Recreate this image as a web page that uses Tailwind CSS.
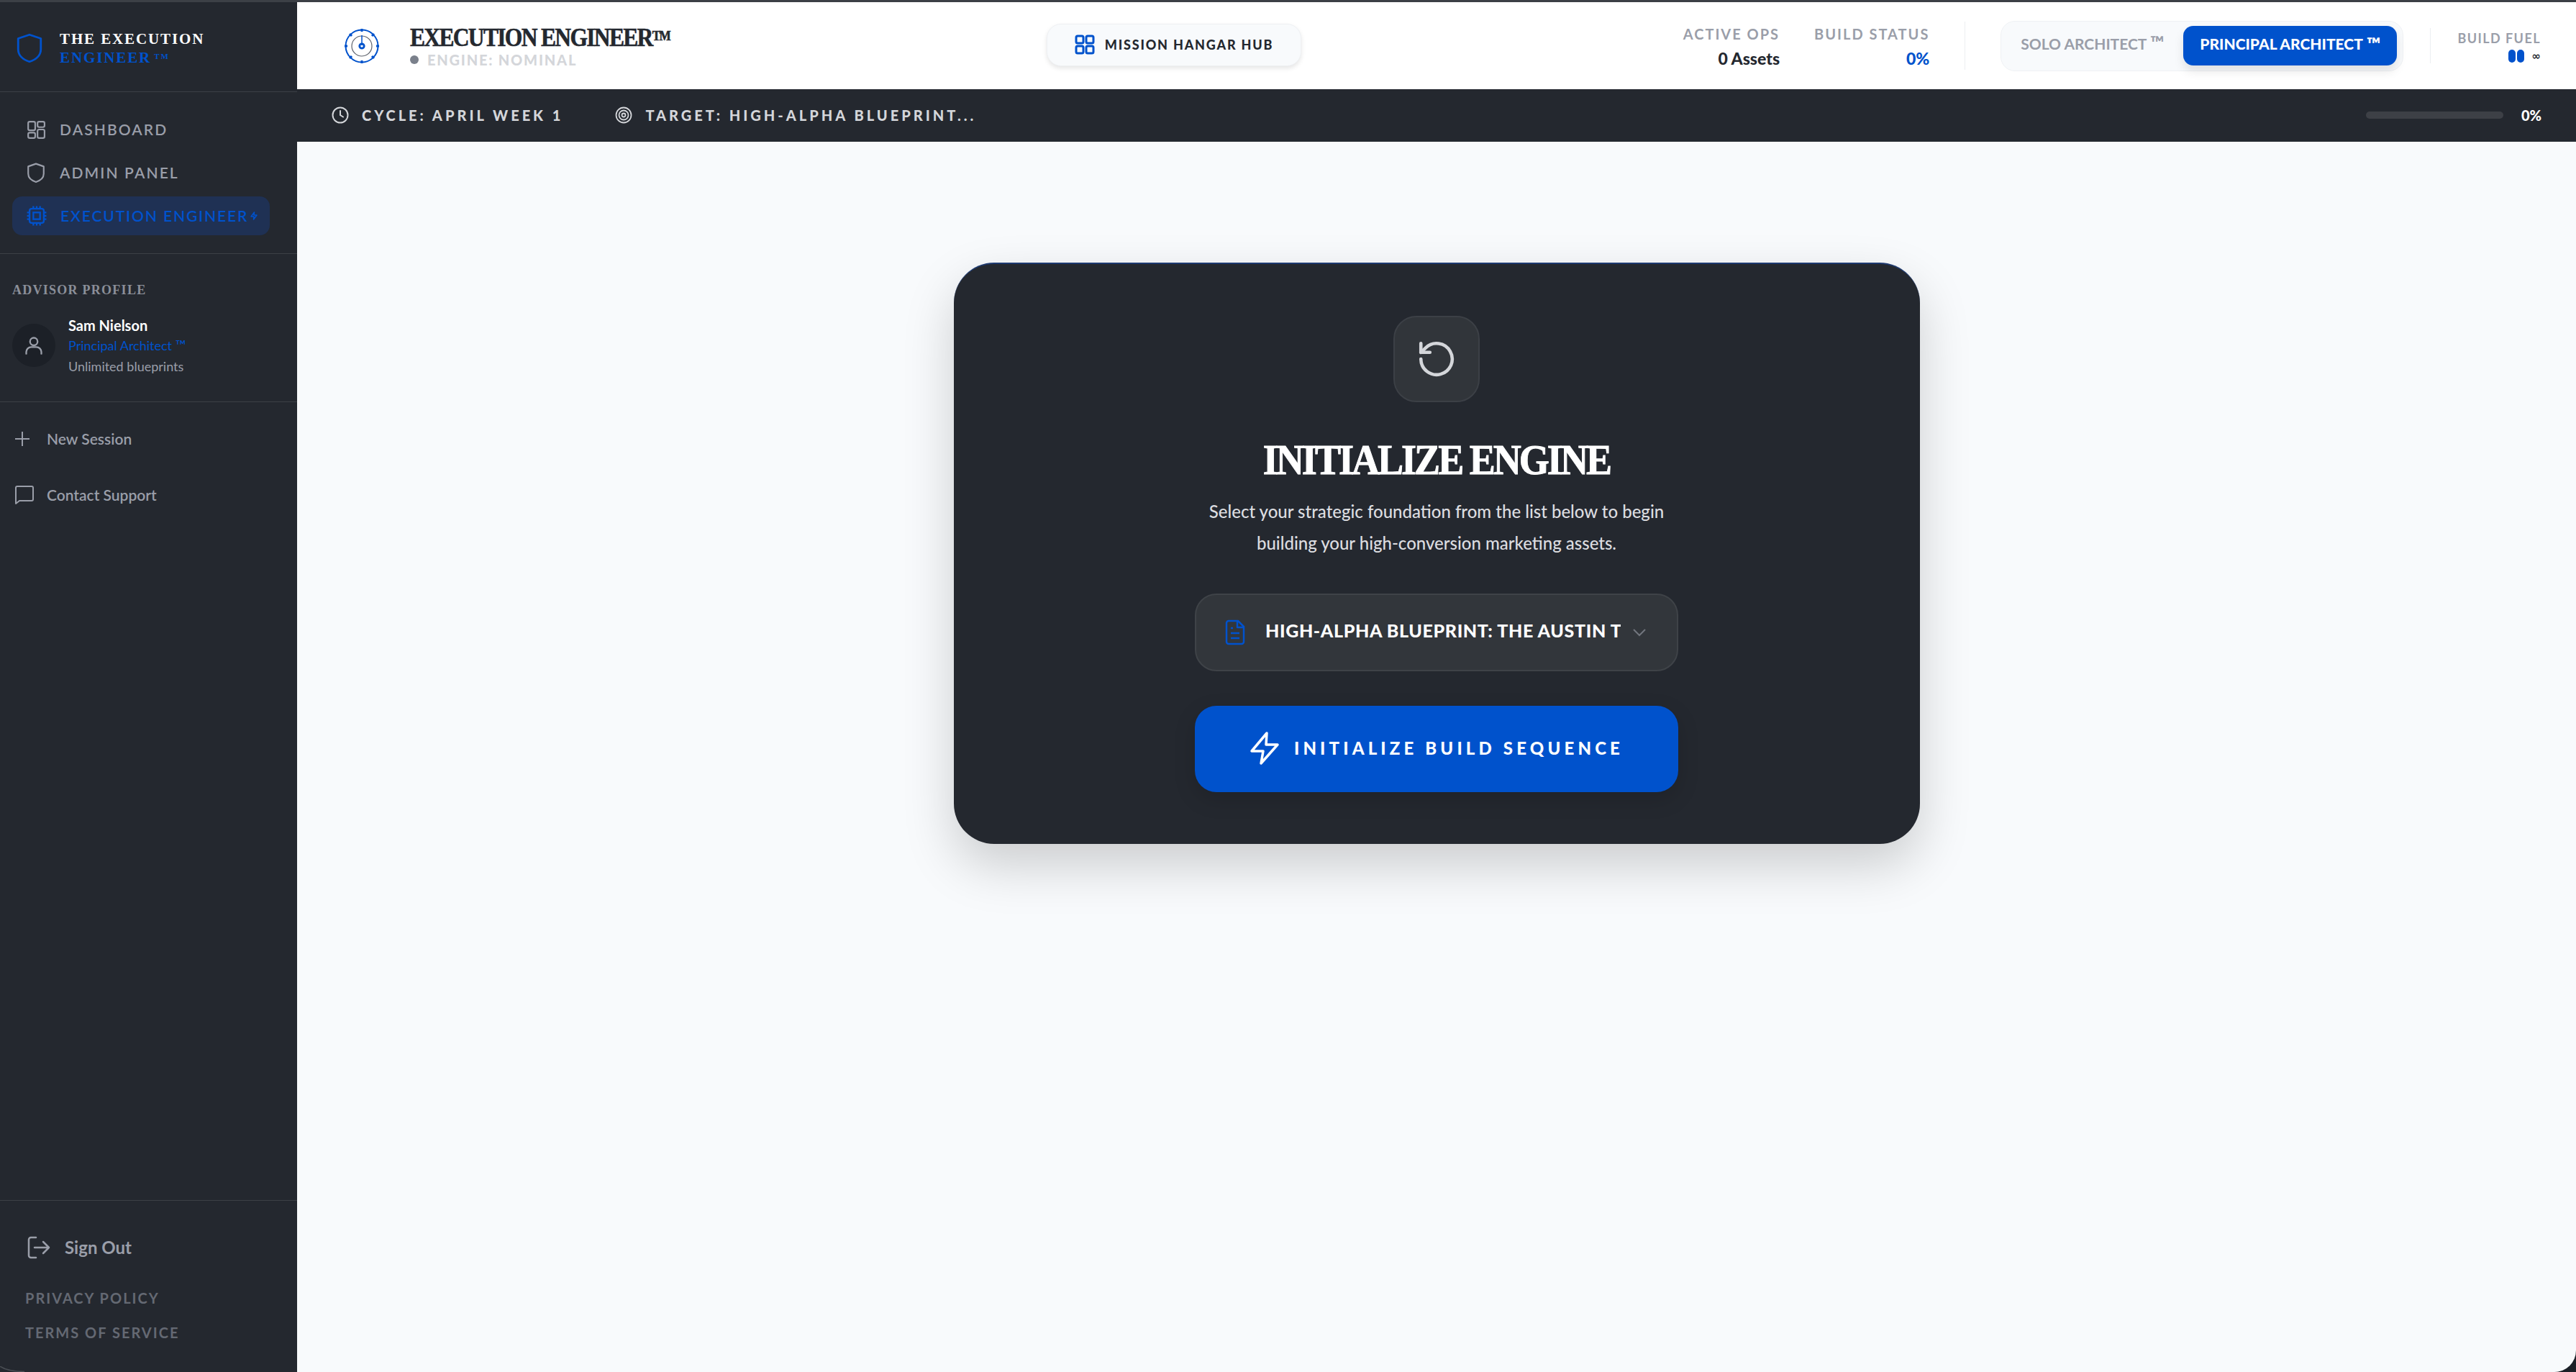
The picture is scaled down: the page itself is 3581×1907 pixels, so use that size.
<!DOCTYPE html>
<html lang="en">
<head>
  <meta charset="UTF-8" />
  <title>Execution Engineer</title>
  <script src="https://cdn.jsdelivr.net/npm/@tailwindcss/browser@4"></script>
</head>
<body class="bg-[#1b2027]">
  <div class="flex h-[1907px] w-[3581px] flex-col overflow-hidden font-['Lato',sans-serif]">
    <div class="h-[3px] shrink-0 bg-[#3c4046]"></div>
    <div class="flex min-h-0 flex-1">
      <!-- Sidebar -->
      <aside class="relative flex w-[413px] shrink-0 flex-col bg-[#24282f]">
        <div class="flex h-[125px] shrink-0 items-center gap-[24px] border-b border-[#3c4046] pt-[4px] pl-[23px]">
          <svg class="h-[44px] w-[36px]" viewBox="0 0 24 28" fill="none" stroke="#0052cc" stroke-width="1.9" stroke-linejoin="round"><path d="M12 1.5 22.5 5v10c0 6-5 9.800-10.500 11.500C6.500 24.800 1.500 21 1.500 15V5z"/></svg>
          <div class="font-['Liberation_Serif',serif] text-[21px] leading-[26px] font-bold tracking-[0.09em] text-white">
            <div>THE EXECUTION</div>
            <div class="text-[#0052cc]">ENGINEER<sup class="ml-[4px] text-[11px]">TM</sup></div>
          </div>
        </div>
        <nav class="flex h-[225px] shrink-0 flex-col gap-[6px] border-b border-[#3c4046] px-[17px] pt-[25px]">
          <a class="flex h-[54px] w-[358px] items-center gap-[20px] px-[20px] text-[21px] font-semibold tracking-[0.1em] text-[#9a9ea9]">
            <svg class="h-[26px] w-[26px]" viewBox="0 0 24 24" fill="none" stroke="currentColor" stroke-width="2"><rect x="2" y="2" width="9" height="11" rx="2"/><rect x="14" y="2" width="9" height="7" rx="2"/><rect x="14" y="12" width="9" height="11" rx="2"/><rect x="2" y="16" width="9" height="7" rx="2"/></svg>
            DASHBOARD
          </a>
          <a class="flex h-[54px] w-[358px] items-center gap-[20px] px-[20px] text-[21px] font-semibold tracking-[0.1em] text-[#9a9ea9]">
            <svg class="h-[28px] w-[26px]" viewBox="0 0 24 26" fill="none" stroke="currentColor" stroke-width="2" stroke-linejoin="round"><path d="M12 1.500 22 5v9.500c0 5.500-4.500 8.800-10 10.500C6.500 23.300 2 20 2 14.500V5z"/></svg>
            ADMIN PANEL
          </a>
          <a class="flex h-[54px] w-[358px] items-center gap-[19px] rounded-[14px] bg-[#1f3154] px-[20px] text-[21px] font-semibold tracking-[0.09em] whitespace-nowrap text-[#0052cc]">
            <svg class="h-[28px] w-[28px] shrink-0" viewBox="0 0 24 24" fill="none" stroke="currentColor" stroke-width="2"><rect x="3.500" y="3.500" width="17" height="17" rx="2.500"/><rect x="8" y="8" width="8" height="8"/><path d="M8 0.500v3M12 0.500v3M16 0.500v3M8 20.500v3M12 20.500v3M16 20.500v3M0.500 8h3M0.500 12h3M0.500 16h3M20.500 8h3M20.500 12h3M20.500 16h3"/></svg>
            <span class="flex items-center">EXECUTION ENGINEER<svg class="ml-[2px] h-[12px] w-[12px]" viewBox="0 0 24 24" fill="none" stroke="currentColor" stroke-width="3" stroke-linejoin="round"><path d="M13 2 4 14h8l-1 8 9-12h-8z"/></svg></span>
          </a>
        </nav>
        <section class="h-[206px] shrink-0 border-b border-[#3c4046] px-[17px] pt-[39px]">
          <div class="font-['Liberation_Serif',serif] text-[18px] leading-[22px] font-bold tracking-[0.07em] text-[#8b8f99]">ADVISOR PROFILE</div>
          <div class="mt-[16px] flex gap-[18px]">
            <div class="mt-[20px] flex h-[60px] w-[60px] items-center justify-center rounded-full bg-[#1c2027]">
              <svg class="h-[28px] w-[28px]" viewBox="0 0 24 24" fill="none" stroke="#9a9ea9" stroke-width="2" stroke-linecap="round"><circle cx="12" cy="7.500" r="4.500"/><path d="M3 22v-2a6 6 0 0 1 6-6h6a6 6 0 0 1 6 6v2"/></svg>
            </div>
            <div class="pt-[9px]">
              <div class="text-[20px] leading-[27px] font-bold text-white">Sam Nielson</div>
              <div class="text-[18px] leading-[28px] text-[#0052cc]">Principal Architect <span class="text-[20px] leading-none">™</span></div>
              <div class="text-[18px] leading-[30px] text-[#9a9ea9]">Unlimited blueprints</div>
            </div>
          </div>
        </section>
        <div class="flex flex-col gap-[40px] px-[20px] pt-[32px]">
          <a class="flex h-[38px] items-center gap-[23px] text-[21px] font-semibold text-[#9a9ea9]">
            <svg class="h-[22px] w-[22px]" viewBox="0 0 22 22" fill="none" stroke="currentColor" stroke-width="2"><path d="M11 1v20M1 11h20"/></svg>
            New Session
          </a>
          <a class="flex h-[38px] items-center gap-[17px] text-[21px] font-semibold text-[#9a9ea9]">
            <svg class="h-[28px] w-[28px]" viewBox="0 0 28 28" fill="none" stroke="currentColor" stroke-width="2" stroke-linejoin="round"><path d="M2 4a2 2 0 0 1 2-2h20a2 2 0 0 1 2 2v16a2 2 0 0 1-2 2H7l-5 4z"/></svg>
            Contact Support
          </a>
        </div>
        <div class="mt-auto h-[239px] border-t border-[#3c4046] px-[35px] pt-[45px]">
          <a class="flex h-[40px] items-center gap-[20px] pl-[3px] text-[24px] font-bold text-[#9a9ea9]">
            <svg class="h-[32px] w-[32px]" viewBox="0 0 32 32" fill="none" stroke="currentColor" stroke-width="2.500" stroke-linecap="round" stroke-linejoin="round"><path d="M12 2H5a3 3 0 0 0-3 3v22a3 3 0 0 0 3 3h7M10 16h20M22 8l8 8-8 8"/></svg>
            Sign Out
          </a>
          <div class="mt-[38px] text-[20px] leading-[24px] font-bold tracking-[0.1em] text-[#646973]">PRIVACY POLICY</div>
          <div class="mt-[24px] text-[20px] leading-[24px] font-bold tracking-[0.1em] text-[#646973]">TERMS OF SERVICE</div>
        </div>
        <svg class="absolute bottom-0 left-0 h-[8px] w-[34px]" viewBox="0 0 34 8" fill="none" stroke="#4a4e54" stroke-width="1.500"><path d="M0 0Q10 7 34 7.500"/></svg>
      </aside>

      <div class="flex min-w-0 flex-1 flex-col overflow-hidden rounded-br-[30px] bg-[#f8fafc]">
        <!-- Header -->
        <header class="relative flex h-[121px] shrink-0 items-center bg-white pr-[49px] pl-[65px]">
          <svg class="h-[50px] w-[50px] shrink-0" viewBox="0 0 50 50" fill="none" stroke="#0052cc">
            <circle cx="25" cy="25" r="22.500" stroke-width="2"/>
            <path d="M25 1v4M25 45v4M1 25h4M45 25h4M8 8l3 3M39 39l3 3M42 8l-3 3M11 39l-3 3" stroke-width="3"/>
            <circle cx="25" cy="25" r="14" stroke="#5b606a" stroke-width="1.200"/>
            <path d="M25 24V10" stroke-width="1.500"/>
            <circle cx="25" cy="25" r="3.200" stroke-width="2.800"/>
          </svg>
          <div class="ml-[42px]">
            <div class="origin-left scale-x-[0.9] font-['Liberation_Serif',serif] text-[35px] leading-[34px] font-bold tracking-[-0.053em] whitespace-nowrap text-[#24282f] [-webkit-text-stroke:0.6px_#24282f]">EXECUTION ENGINEER<span class="align-[8px] text-[19px]">TM</span></div>
            <div class="mt-[2px] flex items-center gap-[12px] text-[20px] leading-[22px] font-black tracking-[0.09em] text-[#d4d6da]"><span class="h-[12px] w-[12px] rounded-full bg-[#7a808b]"></span>ENGINE: NOMINAL</div>
          </div>
          <!-- hangar button sits centered over the header -->
          <button class="absolute top-[30px] left-[1042px] flex h-[59px] w-[354px] items-center justify-center gap-[14px] rounded-[20px] border border-[#eef0f3] bg-[#f8fafc] pb-[1px] text-[18px] font-black tracking-[0.1em] text-[#24282f] shadow-[0_3px_6px_rgba(0,0,0,0.1)]">
            <svg class="h-[28px] w-[28px]" viewBox="0 0 28 28" fill="none" stroke="#0052cc" stroke-width="3"><rect x="2" y="2" width="10" height="10" rx="2"/><rect x="16" y="2" width="10" height="10" rx="2"/><rect x="2" y="16" width="10" height="10" rx="2"/><rect x="16" y="16" width="10" height="10" rx="2"/></svg>
            MISSION HANGAR HUB
          </button>
          <div class="ml-auto flex items-center">
            <div class="text-right">
              <div class="text-[20px] leading-[26px] font-bold tracking-[0.1em] text-[#9a9ea9]">ACTIVE OPS</div>
              <div class="mt-[8px] text-[23px] leading-[26px] font-black text-[#24282f]">0 Assets</div>
            </div>
            <div class="ml-[48px] text-right">
              <div class="text-[20px] leading-[26px] font-bold tracking-[0.1em] text-[#9a9ea9]">BUILD STATUS</div>
              <div class="mt-[8px] text-[23px] leading-[26px] font-black text-[#0052cc]">0%</div>
            </div>
            <div class="mx-[49px] h-[67px] w-px bg-[#eceef1]"></div>
            <div class="flex h-[70px] w-[560px] items-center rounded-[20px] border border-[#eff1f4] bg-[#f8fafc] pr-[8px]">
              <div class="w-[254px] pb-[6px] text-center text-[21px] font-bold whitespace-nowrap text-[#9a9ea9]">SOLO ARCHITECT <span class="text-[26px] leading-none">™</span></div>
              <div class="flex h-[55px] w-[298px] items-center justify-center gap-[5px] rounded-[14px] bg-[#0052cc] pb-[5px] text-[21px] font-black whitespace-nowrap text-white shadow-[0_8px_14px_rgba(0,0,0,0.1)]">PRINCIPAL ARCHITECT <span class="text-[26px] leading-none">™</span></div>
            </div>
            <div class="mx-[37px] h-[49px] w-px bg-[#eceef1]"></div>
            <div class="text-right">
              <div class="text-[18px] leading-[24px] font-bold tracking-[0.08em] text-[#9a9ea9]">BUILD FUEL</div>
              <div class="mt-[4px] flex items-center justify-end gap-[2px]">
                <span class="h-[18px] w-[10px] rounded-full bg-[#0052cc]"></span>
                <span class="h-[18px] w-[10px] rounded-full bg-[#0052cc]"></span>
                <span class="ml-[9px] font-['DejaVu_Sans',sans-serif] text-[15px] leading-[16px] font-bold text-[#24282f]">∞</span>
              </div>
            </div>
          </div>
        </header>
        <!-- Cycle bar -->
        <div class="flex h-[73px] shrink-0 items-center bg-[#24282f] pr-[49px] pl-[48px] pb-[2px] text-[20px] font-black tracking-[0.2em] text-[#d4d6da]">
          <svg class="h-[24px] w-[24px]" viewBox="0 0 24 24" fill="none" stroke="currentColor" stroke-width="2" stroke-linecap="round"><circle cx="12" cy="12" r="10.500"/><path d="M12 6v6l4 2.500"/></svg>
          <span class="ml-[18px]">CYCLE: APRIL WEEK 1</span>
          <svg class="ml-[72px] h-[24px] w-[24px]" viewBox="0 0 24 24" fill="none" stroke="currentColor" stroke-width="1.800"><circle cx="12" cy="12" r="10.500"/><circle cx="12" cy="12" r="6.500"/><circle cx="12" cy="12" r="2.500"/></svg>
          <span class="ml-[18px]">TARGET: HIGH-ALPHA BLUEPRINT...</span>
          <div class="ml-auto h-[10px] w-[191px] rounded-full bg-[#3d4046]"></div>
          <span class="ml-[25px] w-[27px] text-[20px] font-black tracking-normal text-white">0%</span>
        </div>
        <!-- Main -->
        <main class="flex flex-1 justify-center pt-[168px]">
          <div class="flex h-[808px] w-[1343px] flex-col items-center rounded-[56px] border-t-2 border-[#1e3a70] bg-[#24282f] pt-[72px] shadow-[0_30px_70px_rgba(0,0,0,0.18)]">
            <div class="flex h-[120px] w-[120px] items-center justify-center rounded-[32px] border-2 border-[#3c4046] bg-[#31353a]">
              <svg class="h-[58px] w-[58px]" viewBox="0 0 24 24" fill="none" stroke="#d4d6da" stroke-width="1.900" stroke-linecap="round" stroke-linejoin="round"><path d="M3 12a9 9 0 1 0 2.700-6.400L3 8.200"/><path d="M3 3v5.200h5.200"/></svg>
            </div>
            <h1 class="mt-[47px] scale-x-[0.9] font-['Liberation_Serif',serif] text-[60px] leading-[66px] font-bold tracking-[-0.055em] whitespace-nowrap text-white [-webkit-text-stroke:1px_white]">INITIALIZE ENGINE</h1>
            <p class="mt-[17px] text-center text-[24px] leading-[44px] font-medium text-[#dcdde0]">Select your strategic foundation from the list below to begin<br />building your high-conversion marketing assets.</p>
            <div class="mt-[48px] flex h-[108px] w-[672px] items-center rounded-[30px] border-2 border-[#3f4348] bg-[#32363b] pr-[42px] pl-[40px]">
              <svg class="h-[36px] w-[28px] shrink-0" viewBox="0 0 28 36" fill="none" stroke="#0052cc" stroke-width="2.500" stroke-linejoin="round"><path d="M18 2H5a3 3 0 0 0-3 3v26a3 3 0 0 0 3 3h18a3 3 0 0 0 3-3V10z"/><path d="M17 2v9h9M8 12h3M8 19h12M8 26h12"/></svg>
              <div class="ml-[28px] w-[494px] overflow-hidden pb-[4px] text-[25px] font-black tracking-[0.025em] whitespace-nowrap text-white">HIGH-ALPHA BLUEPRINT: THE AUSTIN TECH FOUNDER</div>
              <svg class="ml-auto h-[12px] w-[20px] shrink-0" viewBox="0 0 20 12" fill="none" stroke="#72767e" stroke-width="2"><path d="m2 2 8 8 8-8"/></svg>
            </div>
            <button class="mt-[48px] flex h-[120px] w-[672px] items-center justify-center gap-[20px] rounded-[30px] bg-[#0052cc] pb-[2px] text-[24px] font-black tracking-[0.215em] text-white shadow-[0_10px_30px_rgba(0,0,0,0.15)]">
              <svg class="h-[46px] w-[42px]" viewBox="0 0 42 46" fill="none" stroke="white" stroke-width="3.500" stroke-linecap="round" stroke-linejoin="round"><path d="M24 2 3 27h16l-3 17 23-26H23z"/></svg>
              INITIALIZE BUILD SEQUENCE
            </button>
          </div>
        </main>
      </div>
    </div>
  </div>
</body>
</html>
